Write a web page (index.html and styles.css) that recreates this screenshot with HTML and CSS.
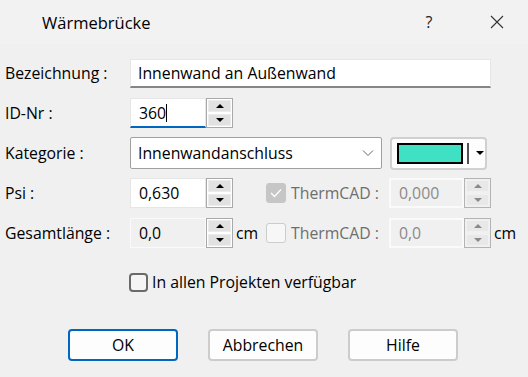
FILE: index.html
```html
<!DOCTYPE html>
<html lang="de">
<head>
    <meta charset="UTF-8">
    <title>Wärmebrücke</title>
    <link rel="stylesheet" href="styles.css">
</head>
<body>
    <div class="dialog">
        <div class="title-bar">
            <span class="title">Wärmebrücke</span>
            <span class="help">?</span>
            <span class="close">
                <svg width="14" height="14" viewBox="0 0 14 14"><path d="M1 1 L13 13 M13 1 L1 13" stroke="#333" stroke-width="1.1" fill="none"/></svg>
            </span>
        </div>

        <div class="form">
            <div class="row">
                <span class="label">Bezeichnung :</span>
                <div class="textbox wide">Innenwand an Außenwand</div>
            </div>

            <div class="row">
                <span class="label">ID-Nr :</span>
                <div class="numeric">
                    <div class="textbox num focused">360<span class="caret"></span></div>
                    <div class="spinner"><span class="up"></span><span class="down"></span></div>
                </div>
            </div>

            <div class="row">
                <span class="label">Kategorie :</span>
                <div class="select">
                    <span>Innenwandanschluss</span>
                    <svg class="chevron" width="12" height="8" viewBox="0 0 12 8"><path d="M1 1.5 L6 6.5 L11 1.5" stroke="#666" stroke-width="1" fill="none"/></svg>
                </div>
                <div class="color-btn">
                    <span class="swatch"></span>
                    <span class="sep"></span>
                    <span class="arrow"></span>
                </div>
            </div>

            <div class="row">
                <span class="label">Psi :</span>
                <div class="numeric">
                    <div class="textbox num">0,630</div>
                    <div class="spinner"><span class="up"></span><span class="down"></span></div>
                </div>
                <span class="unit"></span>
                <span class="check checked"><svg width="12" height="10" viewBox="0 0 12 10"><path d="M1 5 L4.5 8.5 L11 1.5" stroke="#fff" stroke-width="1.3" fill="none"/></svg></span>
                <span class="sub-label">ThermCAD :</span>
                <div class="numeric disabled">
                    <div class="textbox num">0,000</div>
                    <div class="spinner"><span class="up"></span><span class="down"></span></div>
                </div>
            </div>

            <div class="row">
                <span class="label">Gesamtlänge :</span>
                <div class="numeric">
                    <div class="textbox num grey">0,0</div>
                    <div class="spinner"><span class="up"></span><span class="down"></span></div>
                </div>
                <span class="unit">cm</span>
                <span class="check"></span>
                <span class="sub-label">ThermCAD :</span>
                <div class="numeric disabled">
                    <div class="textbox num">0,0</div>
                    <div class="spinner"><span class="up"></span><span class="down"></span></div>
                </div>
                <span class="unit">cm</span>
            </div>
        </div>

        <div class="option">
            <span class="box"></span>
            <span>In allen Projekten verfügbar</span>
        </div>

        <div class="buttons">
            <button class="btn default">OK</button>
            <button class="btn">Abbrechen</button>
            <button class="btn">Hilfe</button>
        </div>
    </div>
</body>
</html>
```

FILE: styles.css
```css
body {
    margin: 0;
    padding: 0;
    background-color: #f0f0f0;
    font-family: "Open Sans", "Noto Sans", sans-serif;
    font-size: 15.8px;
    color: #000;
}

.dialog {
    width: 528px;
    height: 377px;
    overflow: hidden;
}

.title-bar {
    display: flex;
    align-items: center;
    height: 44px;
    background-color: #f2f2f2;
}

.title {
    margin-left: 42px;
    flex: 1;
    font-size: 16.5px;
}

.help {
    width: 20px;
    text-align: center;
    font-size: 16px;
    color: #222;
    margin-right: 51px;
}

.close {
    display: flex;
    width: 14px;
    margin-right: 24px;
}

.form {
    display: flex;
    flex-direction: column;
    gap: 10px;
    padding: 14px 0 0 5px;
}

.row {
    display: flex;
    align-items: center;
    height: 30px;
}

.label {
    width: 125px;
}

.textbox {
    box-sizing: border-box;
    height: 30px;
    display: flex;
    align-items: center;
    padding-left: 7px;
    background-color: #fff;
    border: 1px solid #e6e6e6;
}

.textbox.wide {
    width: 361px;
    height: 29px;
    border-bottom: 2px solid #858585;
}

.numeric {
    display: flex;
    height: 30px;
}

.textbox.num {
    width: 76px;
    padding-left: 8px;
}

.textbox.focused {
    border-bottom: 2px solid #0067c0;
}

.caret {
    display: inline-block;
    width: 1px;
    height: 18px;
    background-color: #000;
}

.textbox.grey {
    background-color: #f0f0f0;
    border-color: #fafafa;
}

.spinner {
    box-sizing: border-box;
    width: 27px;
    height: 30px;
    display: flex;
    flex-direction: column;
    border: 1px solid #a9a9a9;
    background-color: #fff;
    padding: 1px;
    gap: 2px;
}

.spinner span {
    flex: 1;
    background-color: #e1e1e1;
    display: flex;
    justify-content: center;
    align-items: center;
    border: 1px solid #ececec;
}

.spinner .up::after {
    content: "";
    border-left: 4px solid transparent;
    border-right: 4px solid transparent;
    border-bottom: 4px solid #000;
}

.spinner .down::after {
    content: "";
    border-left: 4px solid transparent;
    border-right: 4px solid transparent;
    border-top: 4px solid #000;
}

.select {
    box-sizing: border-box;
    width: 252px;
    height: 32px;
    display: flex;
    align-items: center;
    justify-content: space-between;
    padding: 0 7px 0 7px;
    background-color: #fff;
    border: 1px solid #a0a0a0;
    border-radius: 2px;
}

.color-btn {
    box-sizing: border-box;
    width: 97px;
    height: 33px;
    margin-left: 8px;
    display: flex;
    align-items: center;
    padding-left: 5px;
    background-color: #fdfdfd;
    border: 2px solid #d0d0d0;
    border-radius: 4px;
}

.swatch {
    box-sizing: border-box;
    width: 66px;
    height: 21px;
    background-color: #40e0c4;
    border: 2px solid #000;
}

.sep {
    width: 2px;
    height: 21px;
    margin-left: 4px;
    background-color: #505050;
}

.arrow {
    margin-left: 7px;
    border-left: 4px solid transparent;
    border-right: 4px solid transparent;
    border-top: 4px solid #000;
}

.unit {
    width: 33px;
    padding-left: 3px;
    box-sizing: border-box;
}

.check {
    box-sizing: border-box;
    width: 20px;
    height: 20px;
    border: 1px solid #cccccc;
    border-radius: 3px;
    background-color: #f7f7f7;
    display: flex;
    justify-content: center;
    align-items: center;
}

.check.checked {
    background-color: #c6c6c6;
    border-color: #c6c6c6;
}

.sub-label {
    width: 103px;
    padding-left: 5px;
    box-sizing: border-box;
    color: #6e6e6e;
}

.numeric.disabled .textbox {
    width: 75px;
    background-color: #f0f0f0;
    border: 2px solid #fafafa;
    color: #8a8a8a;
}

.numeric.disabled .spinner {
    border-color: #b4b4b4;
    background-color: #f0f0f0;
}

.numeric.disabled .spinner span {
    background-color: #e8e8e8;
    border-color: #f0f0f0;
}

.numeric.disabled .spinner .up::after {
    border-bottom-color: #8a8a8a;
}

.numeric.disabled .spinner .down::after {
    border-top-color: #8a8a8a;
}

.option {
    display: flex;
    align-items: center;
    gap: 4px;
    margin: 23px 0 0 129px;
}

.option .box {
    box-sizing: border-box;
    width: 19px;
    height: 19px;
    border: 2px solid #6a6a6a;
    border-radius: 4px;
    background-color: #f5f5f5;
}

.buttons {
    display: flex;
    gap: 30px;
    margin: 36px 0 0 68px;
}

.btn {
    box-sizing: border-box;
    width: 110px;
    height: 32px;
    font-family: inherit;
    font-size: 15.8px;
    color: #000;
    background-color: #fdfdfd;
    border: 2px solid #cccccc;
    border-radius: 4px;
    padding: 0;
}

.btn.default {
    border-color: #0067c0;
}
```
